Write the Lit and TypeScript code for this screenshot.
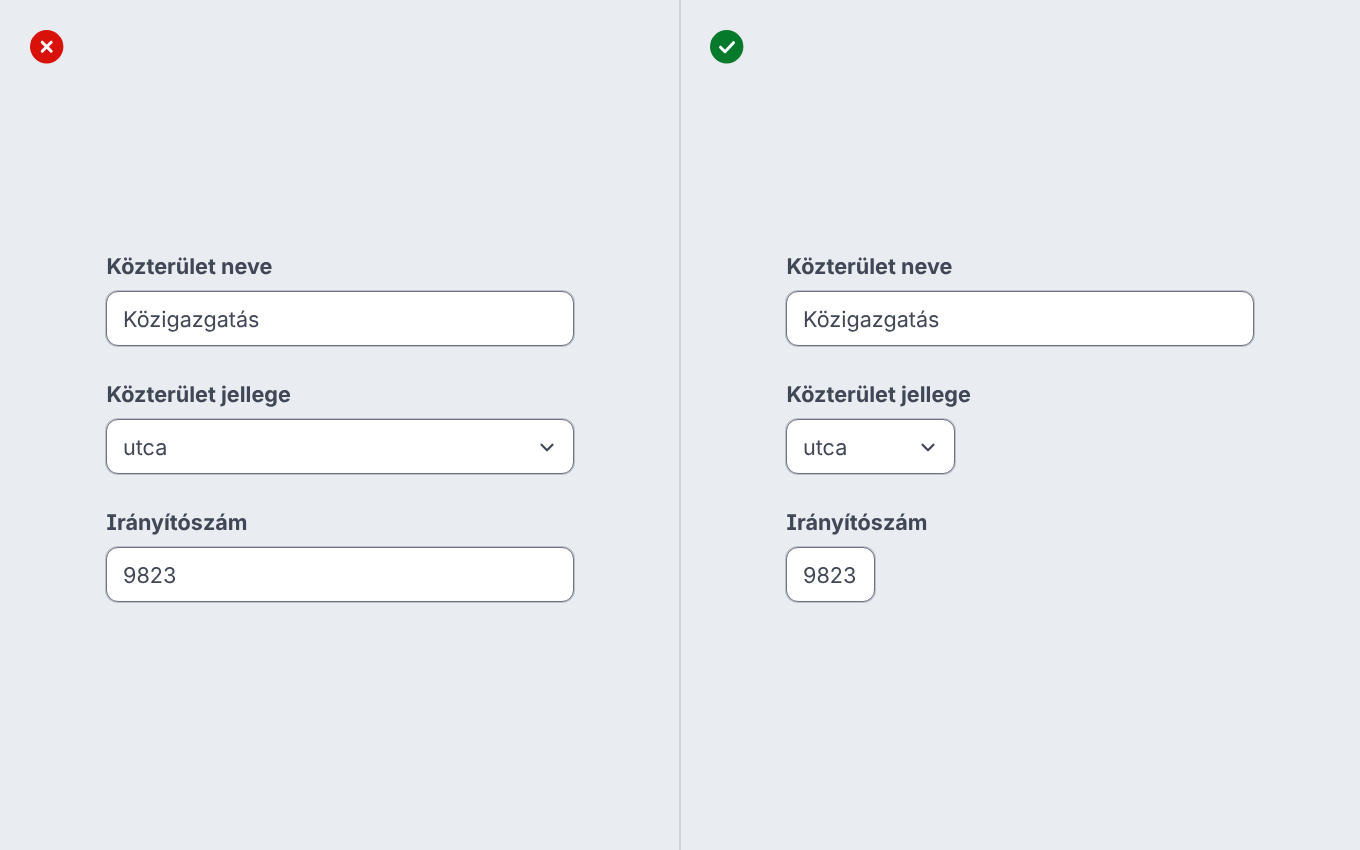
import { LitElement, html, css } from "lit";
import { customElement } from "lit/decorators.js";

const chevron = html`<svg class="chev" viewBox="0 0 16 16" width="20" height="20" fill="none" stroke="currentColor" stroke-width="1.75" stroke-linecap="round" stroke-linejoin="round"><path d="M3.6 6.2L8 10.6l4.4-4.4"/></svg>`;

@customElement("app-root")
class AppRoot extends LitElement {
  static styles = css`
    :host { display: block; width: 1360px; height: 850px; background: #e9ecf1; font-family: Inter, "Liberation Sans", sans-serif; color: #404756; overflow: hidden; text-rendering: geometricPrecision; }
    .page { display: grid; grid-template-columns: 680px 680px; height: 850px; will-change: opacity; }
    .panel { position: relative; display: flex; flex-direction: column; justify-content: center; padding: 0 106px; box-sizing: border-box; height: 850px; }
    .panel.left { border-right: 1px solid #d0d4db; }
    .panel.right { border-left: 1px solid #d0d4db; padding-left: 105px; }
    .status { position: absolute; left: 30px; top: 30px; width: 34px; height: 34px; display: block; }
    .panel.right .status { left: 29px; }
    form { display: flex; flex-direction: column; gap: 32px; padding-top: 2px; }
    .field { display: flex; flex-direction: column; gap: 9px; align-items: flex-start; }
    .label { font-size: 21.6px; line-height: 34px; font-weight: 660; margin-left: 0.6px; height: 32px; font-feature-settings: "cv08" 1; }
    .input { box-sizing: border-box; height: 55px; width: 468px; border: 1px solid #6a7182; box-shadow: 0 0 0 1px rgba(110, 117, 133, 0.36); border-radius: 12px; background: #fff; display: flex; align-items: center; justify-content: space-between; padding: 0 16px; font-size: 21.6px; line-height: 28px; }
    .txt { padding-top: 2px; }
    .chev { color: #404756; flex: none; }
    .w-select { width: 169px; }
    .w-zip { width: 89px; }
  `;

  private panel(ok: boolean) {
    return html`<section class="panel ${ok ? "right" : "left"}">
      ${ok
        ? html`<svg class="status" viewBox="0 0 34 34"><circle cx="16.7" cy="16.7" r="16.7" fill="#067a2b"/><path d="M10.5 17.2l4.5 4.5 8.5-9" fill="none" stroke="#fff" stroke-width="3" stroke-linecap="round" stroke-linejoin="round"/></svg>`
        : html`<svg class="status" viewBox="0 0 34 34"><circle cx="16.7" cy="16.7" r="16.7" fill="#d8120a"/><path d="M12.2 12.2l9 9M21.2 12.2l-9 9" fill="none" stroke="#fff" stroke-width="3" stroke-linecap="round"/></svg>`}
      <form>
        <div class="field">
          <div class="label">Közterület neve</div>
          <div class="input"><span class="txt">Közigazgatás</span></div>
        </div>
        <div class="field">
          <div class="label">Közterület jellege</div>
          <div class="input ${ok ? "w-select" : ""}"><span class="txt">utca</span>${chevron}</div>
        </div>
        <div class="field">
          <div class="label">Irányítószám</div>
          <div class="input ${ok ? "w-zip" : ""}"><span class="txt">9823</span></div>
        </div>
      </form>
    </section>`;
  }

  render() {
    return html`<div class="page">${this.panel(false)}${this.panel(true)}</div>`;
  }
}
